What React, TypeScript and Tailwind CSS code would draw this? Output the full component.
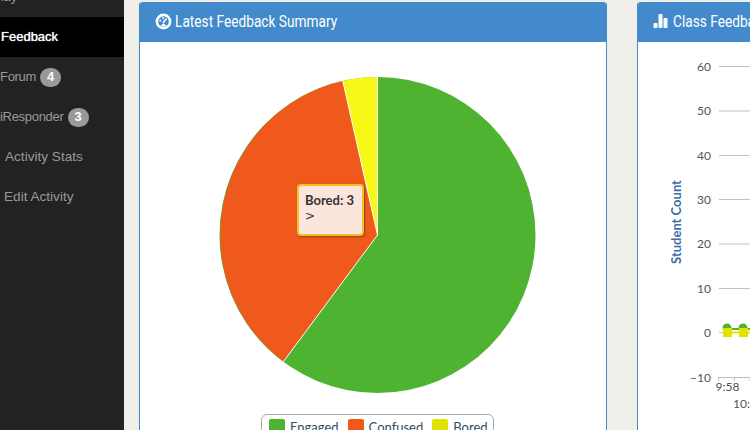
const navItems = [
  { label: "Play", cls: "-ml-[8px] text-[13px]" },
  { label: "Feedback", cls: "pl-[1px] text-[13px]", active: true },
  { label: "Forum", cls: "text-[13px] tracking-[-0.3px]", badge: "4" },
  { label: "iResponder", cls: "text-[13px] tracking-[-0.3px]", badge: "3" },
  { label: "Activity Stats", cls: "pl-[5px] text-[13.6px]" },
  { label: "Edit Activity", cls: "pl-[4px] text-[13.6px]" },
];

const yTicks = [
  { label: "60", y: 66.5 },
  { label: "50", y: 111 },
  { label: "40", y: 155.5 },
  { label: "30", y: 199.5 },
  { label: "20", y: 244 },
  { label: "10", y: 288.5 },
  { label: "0", y: 332.5 },
  { label: "−10", y: 377.5 },
];

const legendItems = [
  { label: "Engaged", swatch: "bg-[#4fb332]" },
  { label: "Confused", swatch: "bg-[#f0581c]" },
  { label: "Bored", swatch: "bg-[#e2e200]" },
];

const PieChart = () => (
  <svg width="466" height="340" viewBox="140 65 466 340" className="block">
    <circle cx="377.5" cy="235" r="158" fill="#4fb332" />
    <path d="M377.5 235 L283.5 361.5 A158 158 0 0 1 342.8 81 Z" fill="#ef5a1c" />
    <path d="M377.5 235 L342.8 81 A158 158 0 0 1 377.5 77 Z" fill="#f8f818" />
    <path d="M283.5 361.5 L377.5 235 L342.8 81 M377.5 235 V77" stroke="#fff" strokeWidth="1" fill="none" />
  </svg>
);

const LineChart = () => (
  <svg width="112" height="388" viewBox="638 42 112 388" className="block" fontFamily="Lato, sans-serif">
    {yTicks.map((t) => (
      <g key={t.label}>
        <line x1="719" x2="750" y1={t.y} y2={t.y} stroke="#c0c0c0" strokeWidth="1" />
        <text x="711" y={t.y + 4} textAnchor="end" fontSize="12" fill="#555">
          {t.label}
        </text>
      </g>
    ))}
    <text
      transform="translate(681 222) rotate(-90)"
      textAnchor="middle"
      fontSize="13"
      fontWeight="700"
      fill="#3c6ea8"
    >
      Student Count
    </text>
    <path d="M718 377.5 H750 M718.5 377 V381 M734.5 377 V381 M750 377 V381" stroke="#b4c0d0" strokeWidth="1" fill="none" />
    <text x="727.5" y="391" textAnchor="middle" fontSize="12" fill="#555">9:58</text>
    <text x="733" y="408" fontSize="12" fill="#555">10:</text>
    <line x1="724" x2="750" y1="329" y2="329" stroke="#4fb332" strokeWidth="2" />
    <line x1="724" x2="750" y1="332.5" y2="332.5" stroke="#e2e200" strokeWidth="2" />
    <circle cx="727" cy="328" r="4.5" fill="#4fb332" />
    <circle cx="743" cy="328" r="4.5" fill="#4fb332" />
    <rect x="723" y="328" width="9" height="9" fill="#e2e200" />
    <rect x="739" y="328" width="9" height="9" fill="#e2e200" />
  </svg>
);

const PanelHeader = ({ icon, title }: { icon: React.ReactNode; title: string }) => (
  <div className="flex h-10 items-center gap-[3px] rounded-t-[3px] bg-[#428acb] pl-[15px] text-white">
    {icon}
    <span className="origin-left scale-x-[0.83] font-['Roboto',sans-serif] text-[16.5px] whitespace-nowrap">{title}</span>
  </div>
);

export default function App() {
  return (
    <div className="flex h-[430px] w-[750px] overflow-hidden bg-[#efeee9]">
      {/* sidebar */}
      <div className="-mt-[23px] h-[453px] w-[124px] shrink-0 overflow-hidden bg-[#222222] font-['Liberation_Sans',sans-serif] text-[#999999]">
        {navItems.map((item) => (
          <div
            key={item.label}
            className={`flex h-10 items-center gap-[4px] whitespace-nowrap ${item.cls} ${
              item.active ? "bg-black text-white [text-shadow:0_0_1px_#fff]" : ""
            }`}
          >
            {item.label}
            {item.badge && (
              <span className="flex h-[19px] w-[21px] items-center justify-center rounded-[10px] bg-[#999999] text-[13px] font-bold tracking-normal text-white">
                {item.badge}
              </span>
            )}
          </div>
        ))}
      </div>

      <div className="flex gap-[30px] pt-[2px] pl-[15px]">
        {/* feedback summary */}
        <div className="h-[440px] w-[468px] shrink-0 rounded-t-[3px] border-x border-[#428acb] bg-white">
          <PanelHeader
            title="Latest Feedback Summary"
            icon={
              <svg width="17" height="17" viewBox="0 0 17 17" className="-mt-[2px]">
                <circle cx="8.5" cy="8.5" r="6.6" fill="#428acb" stroke="#fff" strokeWidth="2.6" />
                <path d="M5.5 12.5 A5 5 0 0 0 11.5 12.5 L8.5 10.5 Z" fill="#fff" />
                <circle cx="5.3" cy="7.6" r="1" fill="#fff" />
                <circle cx="8" cy="5" r="1" fill="#fff" />
                <path d="M8 10 L11.5 5.5" stroke="#fff" strokeWidth="1.6" />
              </svg>
            }
          />
          <div className="relative pt-[23px]">
            <PieChart />
            <div className="absolute top-[142px] left-[157px] flex h-[52px] w-[67px] flex-col rounded-[4px] border-2 border-[#eec520] bg-[#fce5dc] px-[6px] pt-[6px] font-['Lato',sans-serif] text-[13px] leading-[16px] text-[#333333] shadow-[1px_1px_2px_rgba(0,0,0,0.35)]">
              <span className="font-bold whitespace-nowrap">Bored: 3</span>
              <span className="font-['DejaVu_Sans',sans-serif] text-xs">&gt;</span>
            </div>
            <div className="mt-[9px] ml-[121px] flex h-10 w-[233px] items-start gap-[9px] rounded-[6px] border border-[#aaaaaa] px-[7px] pt-[4px] font-['Lato',sans-serif] text-[13px] leading-[16px] text-[#2f4f5f]">
              {legendItems.map((l) => (
                <span key={l.label} className="flex items-center gap-[5px]">
                  <span className={`h-4 w-4 rounded-[2px] ${l.swatch}`} />
                  {l.label}
                </span>
              ))}
            </div>
          </div>
        </div>

        {/* class feedback */}
        <div className="h-[440px] w-[468px] shrink-0 rounded-t-[3px] border-x border-[#428acb] bg-white">
          <PanelHeader
            title="Class Feedback"
            icon={
              <svg width="16" height="16" viewBox="0 0 16 16" fill="#fff" className="-mt-[2px] mr-[1px]">
                <rect x="0.5" y="10" width="4" height="5" rx="1" />
                <rect x="5.5" y="1" width="4" height="14" rx="1" />
                <rect x="10.5" y="5" width="4" height="10" rx="1" />
              </svg>
            }
          />
          <LineChart />
        </div>
      </div>
    </div>
  );
}
